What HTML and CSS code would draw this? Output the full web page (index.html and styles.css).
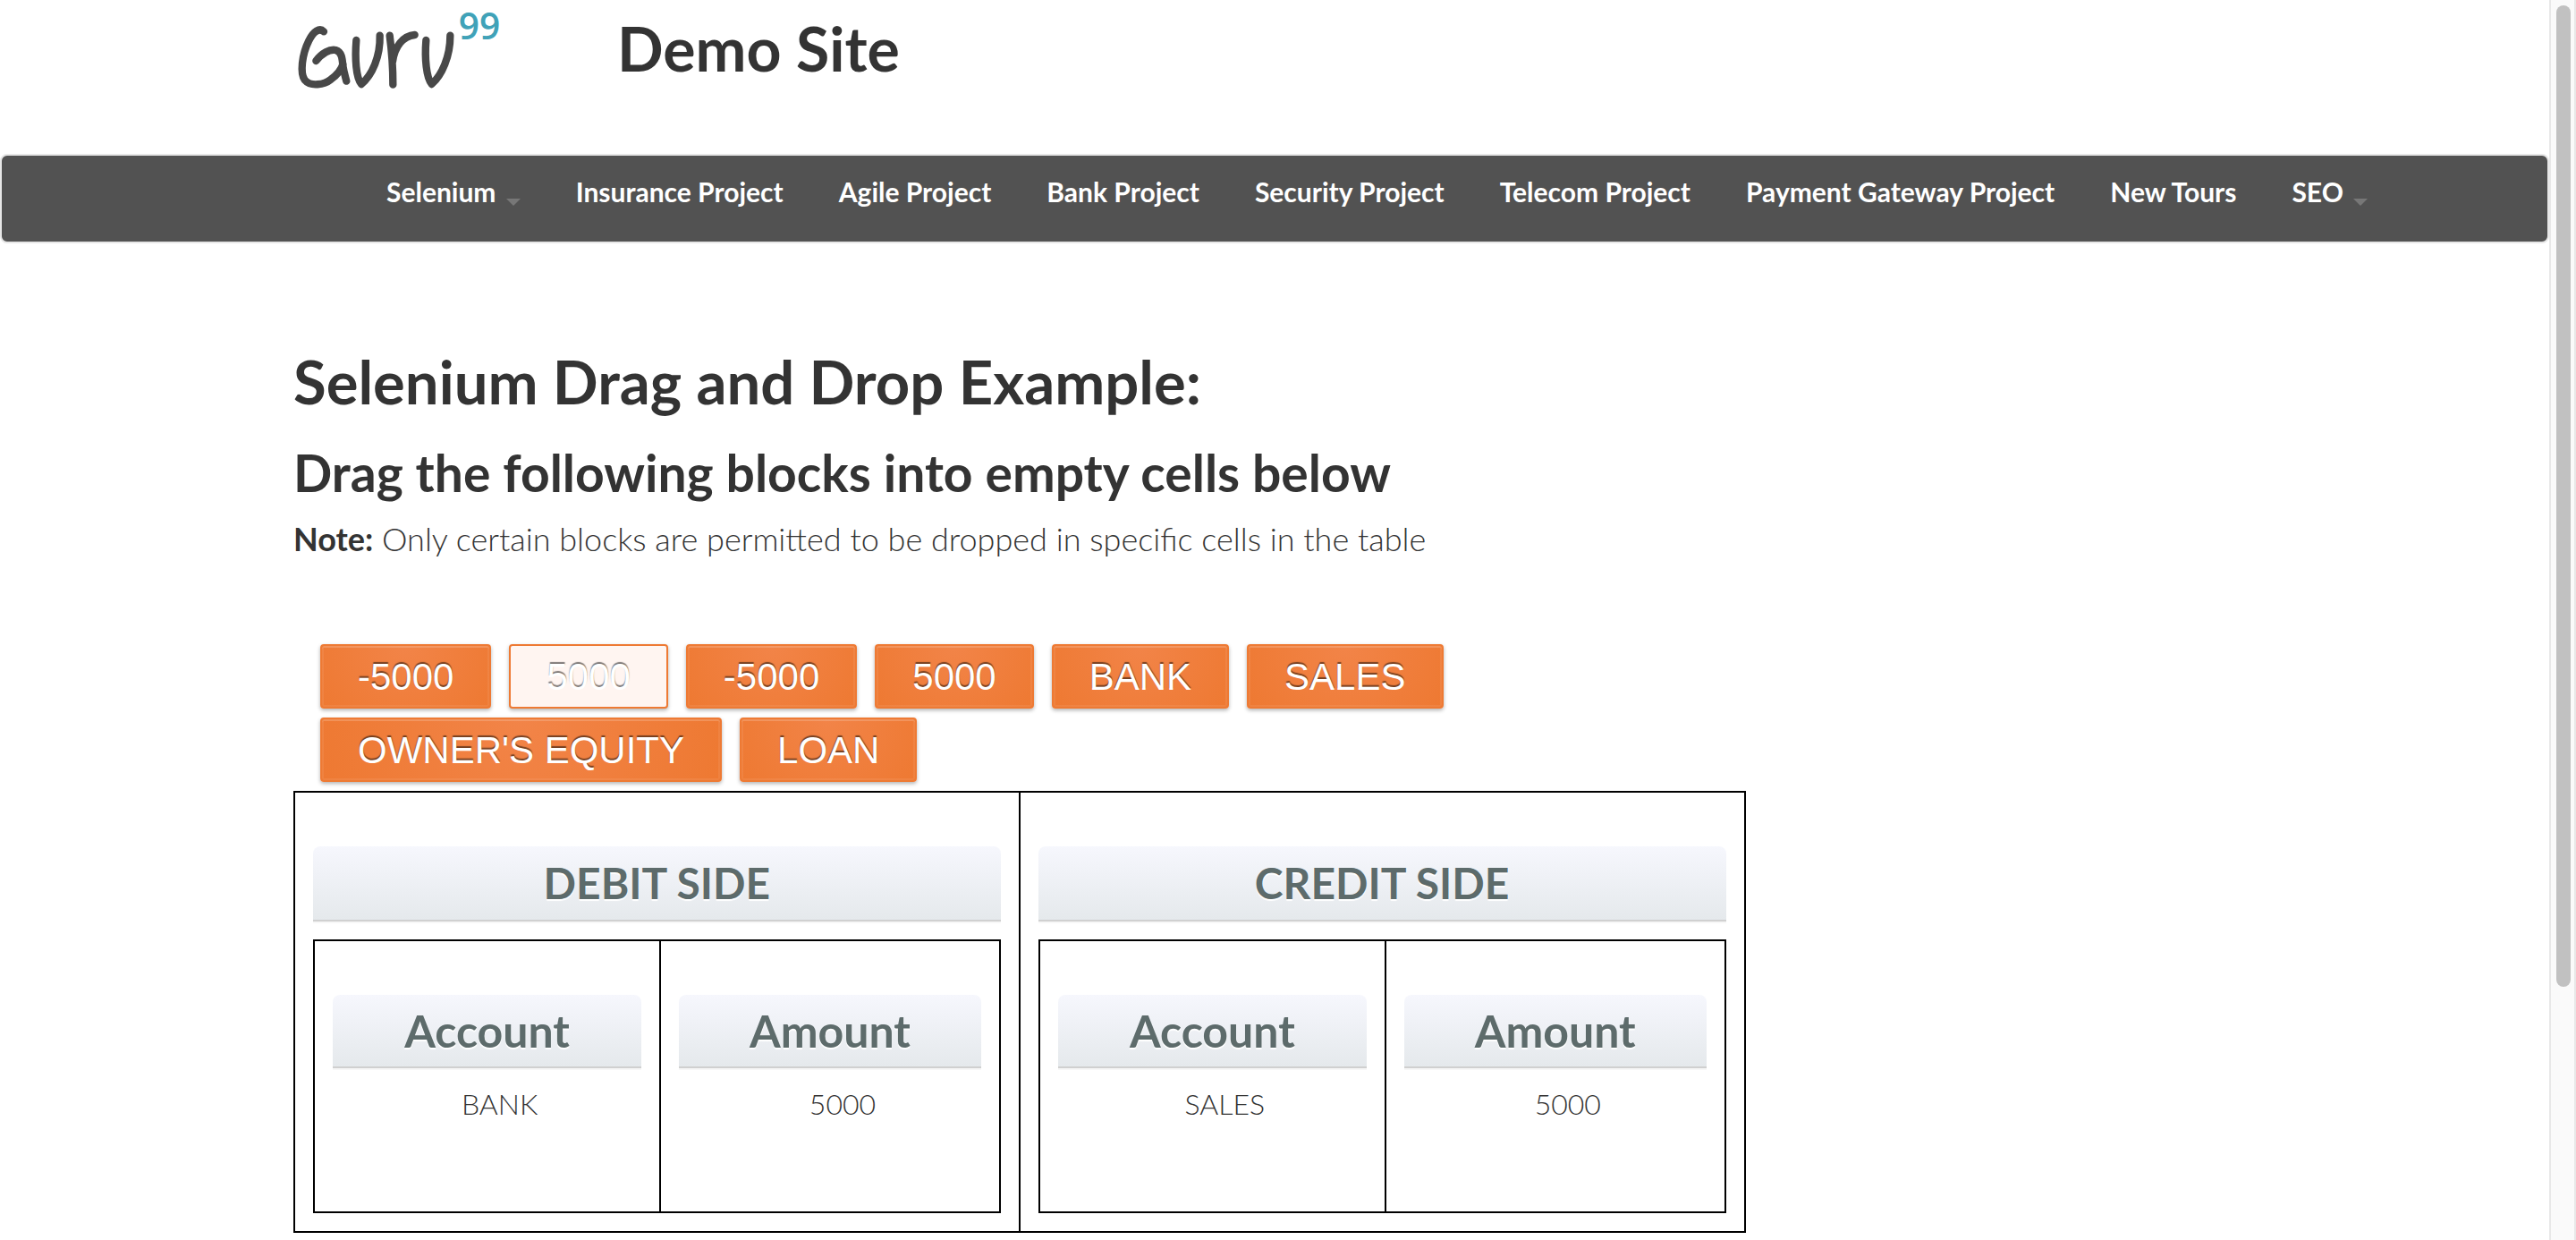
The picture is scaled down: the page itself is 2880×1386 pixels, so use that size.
FILE: index.html
```html
<!DOCTYPE html>
<html lang="en">
<head>
<meta charset="utf-8">
<meta name="viewport" content="width=device-width, initial-scale=1">
<title>Demo Site</title>
<link rel="stylesheet" href="styles.css">
</head>
<body>
<div class="page">
  <header class="container site-header">
    <a class="logo" href="#" aria-label="Guru99">
      <svg width="250" height="110" viewBox="24 0 750 330">
        <g class="logo-word">
          <path d="M126 106C112 92 92 104 76 136C52 184 46 246 62 268C82 292 128 284 150 266C172 250 184 236 190 216"/>
          <path d="M100 204C120 178 146 164 166 168C186 174 188 196 190 220C194 244 198 256 202 272"/>
          <path d="M235 135C230 196 234 262 252 282C288 252 316 190 314 119"/>
          <path d="M347 119C354 172 358 230 358 284M357 206C364 156 392 120 431 117"/>
          <path d="M469 135C464 196 470 262 488 282C522 252 550 190 550 119"/>
        </g>
        <text class="logo-number" x="578" y="131">99</text>
      </svg>
    </a>
    <h2 class="site-title">Demo Site</h2>
  </header>

  <nav class="navbar">
    <ul class="container nav-list">
      <li><a href="#">Selenium <span class="caret"></span></a></li>
      <li><a href="#">Insurance Project</a></li>
      <li><a href="#">Agile Project</a></li>
      <li><a href="#">Bank Project</a></li>
      <li><a href="#">Security Project</a></li>
      <li><a href="#">Telecom Project</a></li>
      <li><a href="#">Payment Gateway Project</a></li>
      <li><a href="#">New Tours</a></li>
      <li><a href="#">SEO <span class="caret"></span></a></li>
    </ul>
  </nav>

  <main class="container">
    <h1 class="heading">Selenium Drag and Drop Example:</h1>
    <h2 class="subheading">Drag the following blocks into empty cells below</h2>
    <p class="note"><strong>Note:</strong> Only certain blocks are permitted to be dropped in specific cells in the table</p>

    <div class="board">
      <ul class="blocks">
        <li><a class="block" href="#">-5000</a></li>
        <li><a class="block block-active" href="#">5000</a></li>
        <li><a class="block" href="#">-5000</a></li>
        <li><a class="block" href="#">5000</a></li>
        <li><a class="block" href="#">BANK</a></li>
        <li><a class="block" href="#">SALES</a></li>
        <li><a class="block" href="#">OWNER'S EQUITY</a></li>
        <li><a class="block" href="#">LOAN</a></li>
      </ul>

      <table class="ledger">
        <tr>
          <td>
            <h3 class="bar">DEBIT SIDE</h3>
            <table class="ledger side">
              <tr>
                <td><h4 class="bar bar-column">Account</h4><ol class="drop"><li>BANK</li></ol></td>
                <td><h4 class="bar bar-column">Amount</h4><ol class="drop"><li>5000</li></ol></td>
              </tr>
            </table>
          </td>
          <td>
            <h3 class="bar">CREDIT SIDE</h3>
            <table class="ledger side">
              <tr>
                <td><h4 class="bar bar-column">Account</h4><ol class="drop"><li>SALES</li></ol></td>
                <td><h4 class="bar bar-column">Amount</h4><ol class="drop"><li>5000</li></ol></td>
              </tr>
            </table>
          </td>
        </tr>
      </table>
    </div>
  </main>
</div>
<div class="scrollbar" aria-hidden="true"><div class="thumb"></div></div>
</body>
</html>
```
FILE: styles.css
```css
* { box-sizing: border-box; }

body {
  display: flex;
  min-height: 100vh;
  margin: 0;
  background: #fff;
  color: #333;
  font-family: Lato, "Liberation Sans", sans-serif;
  font-size: 36px;
}

h1, h2, h3, h4, p, ul, ol { margin: 0; padding: 0; }
ul, ol { list-style: none; }

.page { flex: 1; min-width: 0; }
.container { max-width: 2194px; margin: 0 auto; }

.site-header {
  display: flex;
  gap: 112px;
  height: 172px;
}
.logo { width: 250px; height: 110px; }
.logo-word {
  fill: none;
  stroke: #484848;
  stroke-width: 25;
  stroke-linecap: round;
  stroke-linejoin: round;
}
.logo-number {
  fill: #40a2b8;
  font-family: "Open Sans", sans-serif;
  font-size: 122px;
  font-weight: 600;
}
.site-title { padding-top: 18px; font-size: 68px; line-height: 72px; }

.navbar {
  height: 100px;
  border: 2px solid #e7e7e7;
  border-radius: 8px;
  background: #525252;
}
.nav-list {
  display: flex;
  gap: 62px;
  padding: 16px 0 0 104px;
}
.nav-list a {
  color: #fff;
  font-size: 30px;
  font-weight: 700;
  line-height: 40px;
  text-decoration: none;
  white-space: nowrap;
}
.caret {
  display: inline-block;
  margin-left: 4px;
  border: 8px solid transparent;
  border-top-color: #777;
  border-bottom: 0;
  vertical-align: -4px;
}

main { padding-top: 114px; }
.heading { font-size: 67px; line-height: 80px; }
.subheading { margin-top: 26px; font-size: 57px; line-height: 72px; }
.note { margin-top: 14px; font-size: 36px; font-weight: 300; line-height: 48px; }
.note strong { font-weight: 700; }

.board { width: 74%; margin-top: 94px; }
.blocks {
  display: flex;
  flex-wrap: wrap;
  gap: 10px 20px;
  padding: 0 0 10px 30px;
}
.block {
  display: block;
  padding: 2px 40px 0;
  border: 2px solid #ee7a34;
  border-radius: 4px;
  background: radial-gradient(circle at 50% 0, #f28448, #ee7932);
  box-shadow: 0 2px 4px rgba(0, 0, 0, .3), inset 0 0 0 2px rgba(255, 255, 255, .07), inset 0 2px 0 rgba(255, 255, 255, .12);
  color: #fff;
  font-family: "Liberation Sans", Arial, sans-serif;
  font-size: 42px;
  line-height: 66px;
  text-decoration: none;
  text-shadow: 0 -2px 1px rgba(0, 0, 0, .5);
}
.block-active { background: #fff5f1; }

.ledger {
  width: 100%;
  border-collapse: collapse;
  table-layout: fixed;
}
.ledger td {
  padding: 60px 20px 20px;
  border: 2px solid #000;
  vertical-align: top;
}
.side { margin-top: 20px; }
.side td:first-child { width: 50.5%; }
.bar {
  border-bottom: 2px solid #d0d0d0;
  border-radius: 8px 8px 0 0;
  background: linear-gradient(#f6f7fd, #e5e9ec);
  box-shadow: 0 2px 0 #f7f7f7;
  color: #5d6b6b;
  font-size: 48px;
  line-height: 82px;
  text-align: center;
  text-shadow: 0 2px 1px #fff;
}
.bar-column { font-size: 50px; line-height: 80px; }
.drop {
  height: 140px;
  padding: 20px 0 0 28px;
  font-size: 32px;
  font-weight: 300;
  line-height: 40px;
  text-align: center;
}

.scrollbar {
  position: sticky;
  top: 0;
  flex: 0 0 30px;
  height: 100vh;
  padding: 6px 4px 0 6px;
  border: 0 solid #e8e8e8;
  border-width: 0 2px;
  background: #fafafa;
}
.thumb { height: 79.5%; border-radius: 8px; background: #c1c1c1; }
```
